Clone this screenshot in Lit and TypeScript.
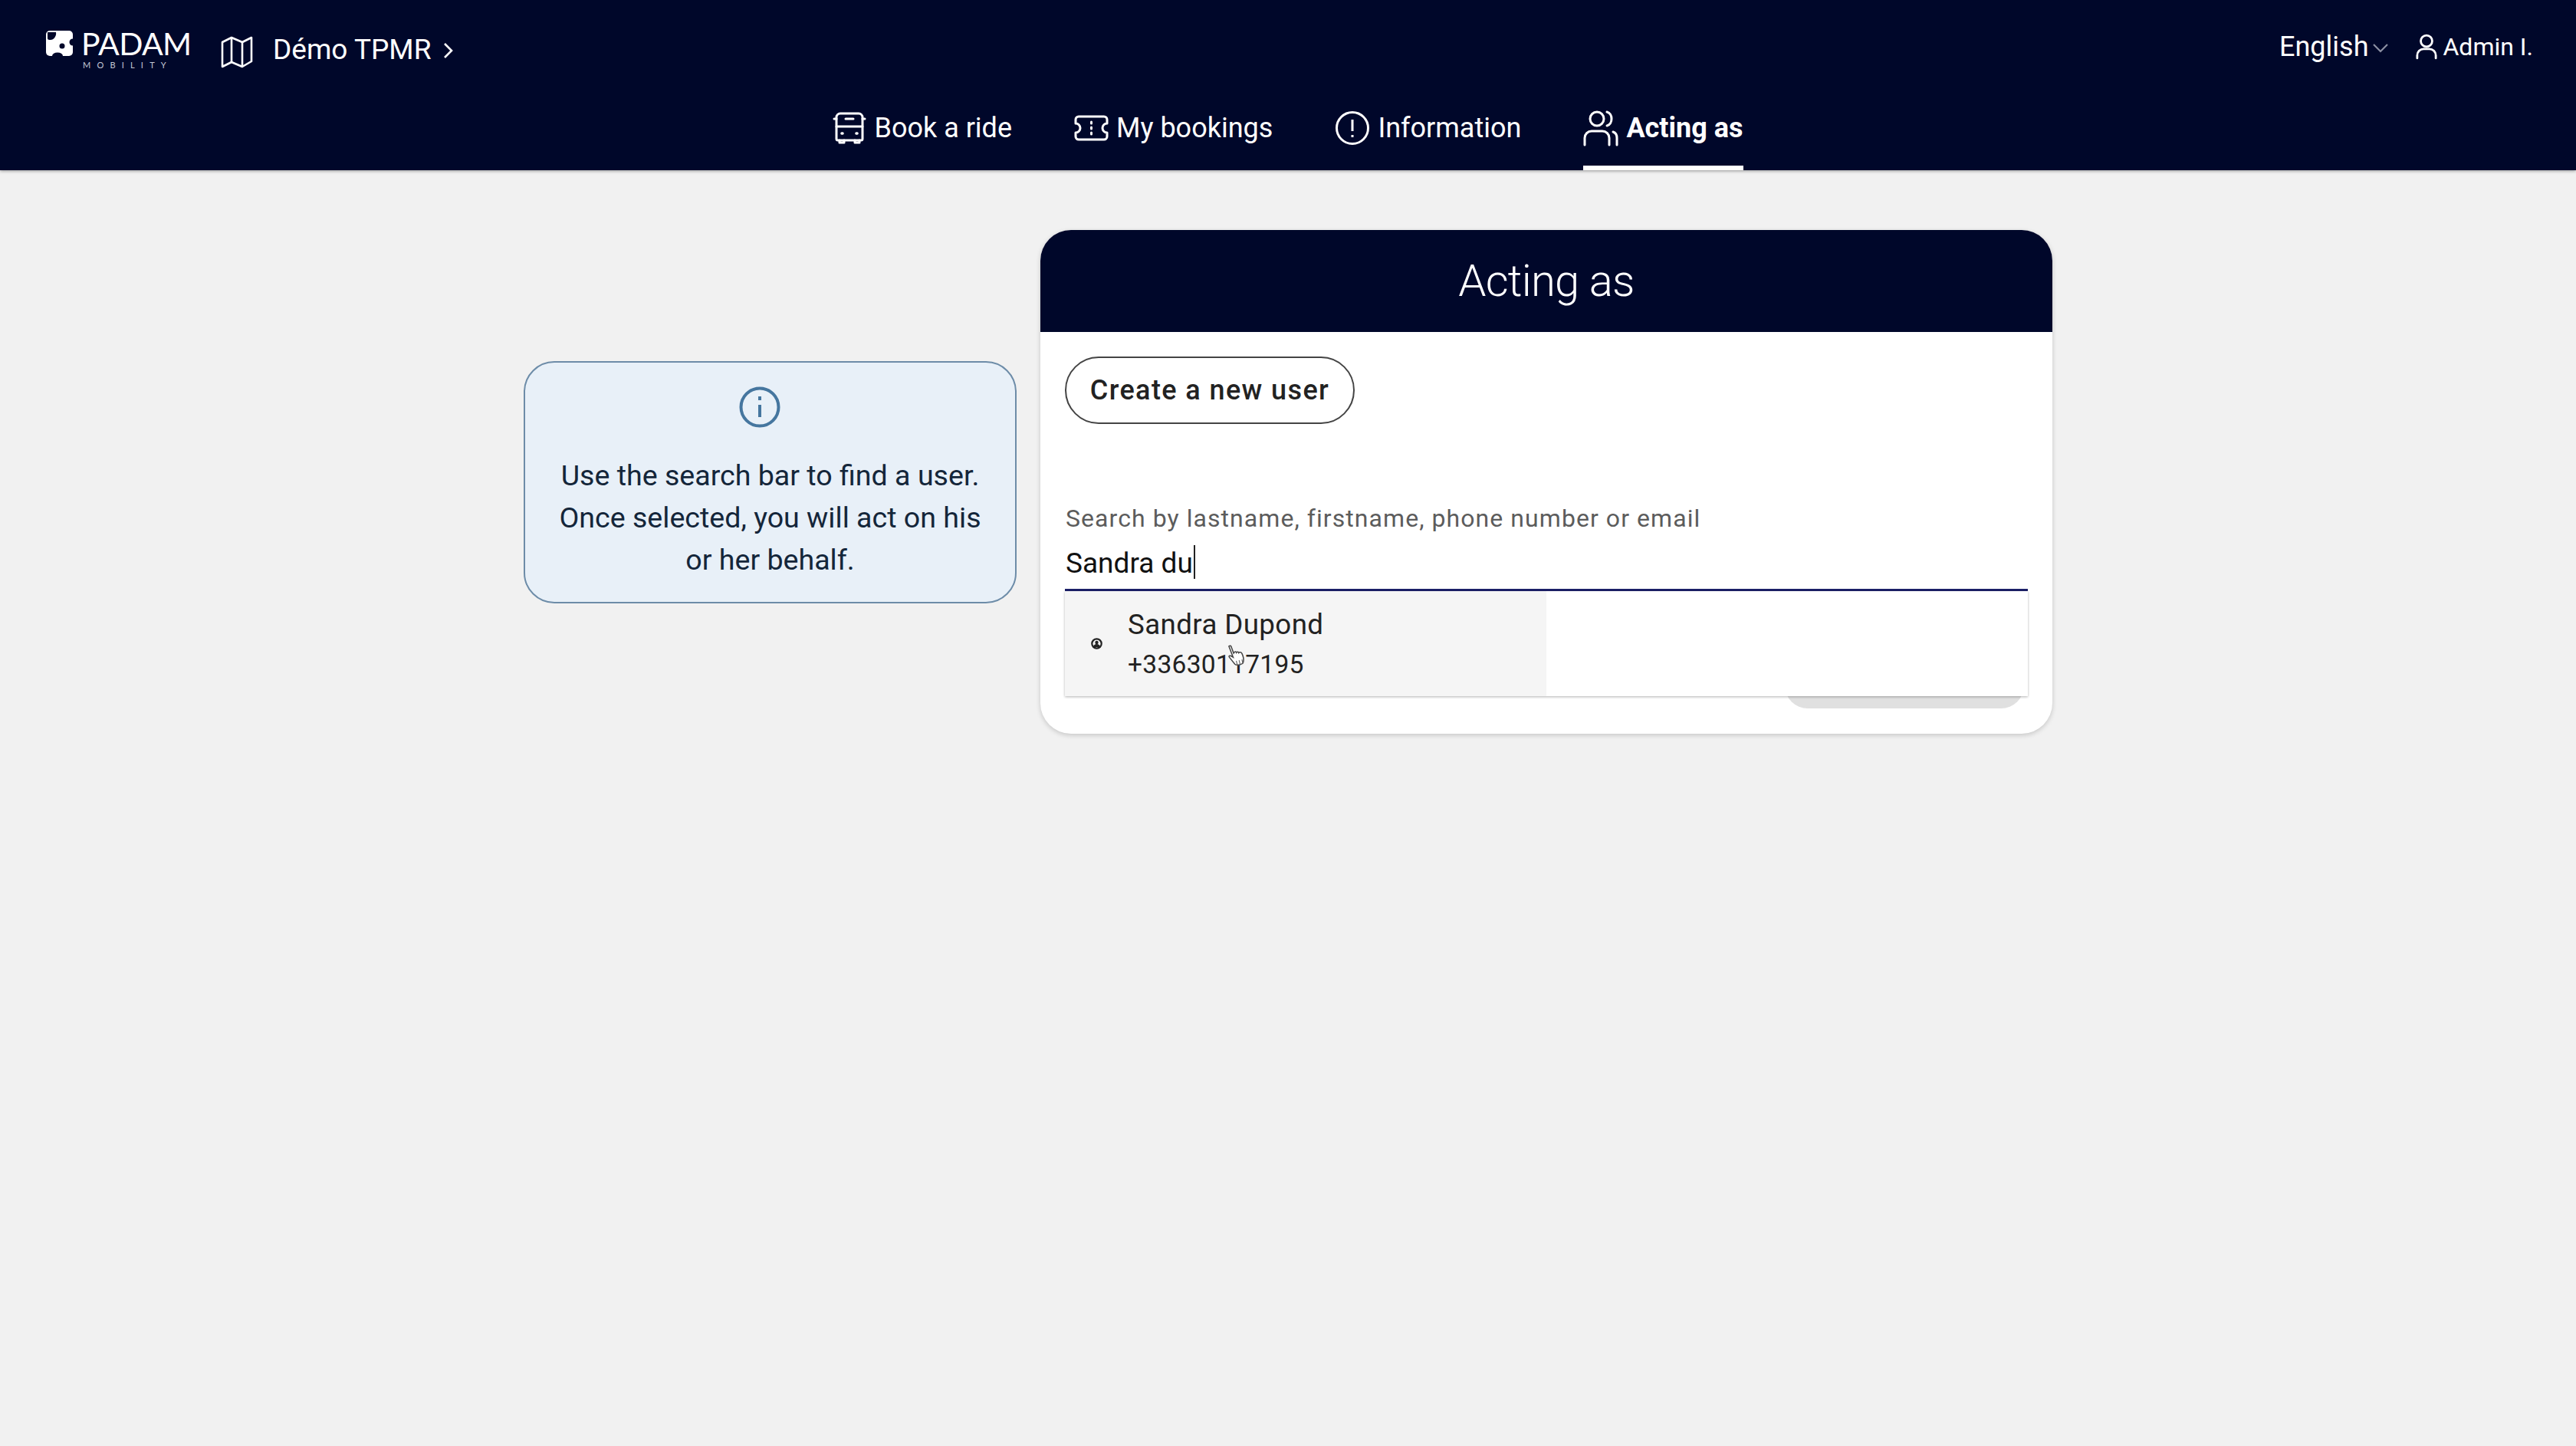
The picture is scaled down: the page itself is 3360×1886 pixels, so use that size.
import { LitElement, html, css } from "lit";
import { customElement } from "lit/decorators.js";

@customElement("app-root")
export class AppRoot extends LitElement {
  static styles = css`
    :host { display: block; min-height: 1886px; background: #f1f1f1; font-family: Roboto, "Liberation Sans", sans-serif; color: #111; }
    svg { display: block; flex: none; }
    header { height: 222px; background: #00072a; color: #fff; box-sizing: border-box; position: relative; box-shadow: 0 1px 4px rgba(0,0,0,.4); }
    .top { display: flex; align-items: flex-start; justify-content: space-between; padding: 37px 56px 0 60px; height: 100px; box-sizing: border-box; }
    .left, .right { display: flex; align-items: center; }
    .logo { display: flex; gap: 11px; width: 188px; margin-right: 40px; }
    .wordmark { display: flex; flex-direction: column; font-family: Lato, sans-serif; font-weight: 400; margin-top: -1px; }
    .padam { font-size: 41px; line-height: 42px; letter-spacing: -.6px; }
    .mob { font-size: 11px; line-height: 14px; letter-spacing: 8.2px; color: #c4c8d6; white-space: nowrap; padding-left: 2px; }
    .project { font-size: 37px; margin-left: 26px; }
    .chev { margin-left: 16px; margin-top: 2px; }
    .right { padding-top: 3px; }
    .lang { font-size: 36px; }
    .langchev { margin: 4px 0 0 6px; }
    .user { margin-left: 36px; }
    .admin { font-size: 32px; margin-left: 7px; }
    nav { display: flex; justify-content: center; height: 122px; }
    nav a { display: flex; align-items: center; gap: 10px; font-size: 36px; height: 122px; margin: 0 40.5px; padding-top: 18px; border-bottom: 6px solid transparent; box-sizing: border-box; }
    nav a.active { font-weight: 700; font-size: 36px; border-bottom-color: #fff; }
    main { display: flex; justify-content: center; align-items: flex-start; gap: 31px; padding-top: 78px; }
    .info { width: 643px; height: 316px; margin-top: 171px; box-sizing: border-box; background: #e8f0f8; border: 2px solid #6d8ca8; border-radius: 40px; display: flex; flex-direction: column; align-items: center; padding-top: 31px; }
    .infoicon { margin-right: 27px; }
    .info p { margin: 35px 0 0; font-size: 37.6px; line-height: 55px; text-align: center; color: #14263a; white-space: nowrap; }
    .card { width: 1320px; height: 657px; box-sizing: border-box; background: #fff; border-radius: 40px; box-shadow: 0 2px 6px rgba(0,0,0,.18); display: flex; flex-direction: column; }
    .card h1 { margin: 0; height: 133px; background: #00072a; color: #fff; border-radius: 40px 40px 0 0; font-size: 58px; letter-spacing: -.8px; font-weight: 300; text-align: center; line-height: 133px; }
    .body { flex: 1; padding: 32px 32px 33px; display: flex; flex-direction: column; position: relative; }
    .create { align-self: flex-start; height: 88px; width: 378px; box-sizing: border-box; border: 2px solid #444; border-radius: 44px; background: #fff; font: 500 36px Roboto, sans-serif; letter-spacing: 1.4px; color: #222; padding: 0; }
    label { margin-top: 103px; padding-left: 1px; font-size: 32px; line-height: 40px; letter-spacing: 1.06px; color: #5c5c5c; }
    .field { height: 72px; box-sizing: content-box; border-bottom: 3px solid #1c2068; padding-left: 1px; font-size: 37px; line-height: 78px; color: #111; display: flex; }
    .field span { height: 72px; }
    .caret { width: 2px; height: 44px; background: #222; margin: 15px 0 0 1px; }
    .dropdown { position: absolute; left: 32px; right: 32px; top: 338px; height: 137px; background: #fff; box-shadow: 0 1px 3px rgba(0,0,0,.3); z-index: 2; }
    .item { width: 50%; height: 100%; background: #f5f5f5; display: flex; align-items: center; position: relative; }
    .dot { margin-left: 34px; }
    .names { margin-left: 33px; display: flex; flex-direction: column; gap: 8px; padding-top: 2px; }
    .name { font-size: 36.7px; line-height: 44px; letter-spacing: .4px; color: #222; }
    .phone { font-size: 33.5px; line-height: 44px; letter-spacing: .3px; color: #222; }
    .cursor { position: absolute; left: 211px; top: 68px; transform: rotate(-14deg); }
    .search { align-self: flex-end; margin: auto 5px 0 0; width: 312px; height: 60px; background: #e0e0e0; border-radius: 44px; }
  `;

  render() {
    return html`
      <header>
        <div class="top">
          <div class="left">
            <div class="logo">
              <svg width="35" height="33" viewBox="0 0 35 33" style="margin-top:3px"><rect width="35" height="33" rx="5" fill="#fff"/><path d="M2 2h11c1 5-3 10-7 10-2 0-4 0-4-2z" fill="#00072a"/><circle cx="21" cy="20" r="3.5" fill="#00072a"/><circle cx="35" cy="15" r="4.5" fill="#00072a"/><ellipse cx="15" cy="33" rx="7" ry="4.5" fill="#00072a"/></svg>
              <div class="wordmark"><span class="padam">PADAM</span><span class="mob">MOBILITY</span></div>
            </div>
            <svg width="42" height="44" viewBox="0 0 42 44" fill="none" stroke="#fff" stroke-width="2.6" stroke-linejoin="round" style="margin-top:6px"><path d="M2 9l12-6 14 6 12-6v31l-12 7-14-6-12 6z"/><path d="M14 3v32M28 9v32"/></svg>
            <span class="project">Démo TPMR</span>
            <svg class="chev" width="14" height="22" viewBox="0 0 14 22" fill="none" stroke="#fff" stroke-width="2.6"><path d="M2 2l9 9-9 9"/></svg>
          </div>
          <div class="right">
            <span class="lang">English</span>
            <svg class="langchev" width="20" height="12" viewBox="0 0 20 12" fill="none" stroke="#8b90a3" stroke-width="2.2"><path d="M1 1l9 9 9-9"/></svg>
            <svg class="user" width="28" height="36" viewBox="0 0 30 36" fill="none" stroke="#fff" stroke-width="3"><circle cx="15" cy="10" r="8"/><path d="M2 34v-4a9 9 0 0 1 9-9h8a9 9 0 0 1 9 9v4" stroke-linecap="round"/></svg>
            <span class="admin">Admin I.</span>
          </div>
        </div>
        <nav>
          <a>
            <svg width="44" height="42" viewBox="0 0 44 42" fill="none" stroke="#fff" stroke-width="3" stroke-linejoin="round" stroke-linecap="round"><path d="M10 2h24a5 5 0 0 1 5 5v28a2 2 0 0 1-2 2H7a2 2 0 0 1-2-2V7a5 5 0 0 1 5-5z"/><path d="M5 19h34M5 9H2M39 9h3M17 9h10M9 37v3h6v-3M29 37v3h6v-3"/><path d="M12 28h1M31 28h1" stroke-width="3.6"/></svg>
            Book a ride
          </a>
          <a>
            <svg width="45" height="34" viewBox="0 0 45 34" fill="none" stroke="#fff" stroke-width="3" stroke-linejoin="round" stroke-linecap="round"><path d="M6 2h33a4 4 0 0 1 4 4v5a6 6 0 0 0 0 12v5a4 4 0 0 1-4 4H6a4 4 0 0 1-4-4v-5a6 6 0 0 0 0-12V6a4 4 0 0 1 4-4z"/><path d="M22.5 9v2M22.5 16v2M22.5 23v2"/></svg>
            My bookings
          </a>
          <a>
            <svg width="46" height="46" viewBox="0 0 46 46" fill="none" stroke="#fff" stroke-width="3"><circle cx="23" cy="23" r="20.5"/><path d="M23 12v15M23 32v3"/></svg>
            Information
          </a>
          <a class="active">
            <svg width="46" height="48" viewBox="0 0 46 48" fill="none" stroke="#fff" stroke-width="3" stroke-linecap="round"><circle cx="18" cy="12" r="9"/><path d="M2 46v-9a9 9 0 0 1 9-9h14a9 9 0 0 1 9 9v9"/><path d="M31 3c4 1 6 5 6 9s-2 8-6 9M39 29c3 1 5 4 5 8v9"/></svg>
            Acting as
          </a>
        </nav>
      </header>
      <main>
        <aside class="info">
          <svg class="infoicon" width="54" height="54" viewBox="0 0 54 54" fill="none" stroke="#45769f" stroke-width="4"><circle cx="27" cy="27" r="24.5"/><path d="M27 24v16M27 13v5"/></svg>
          <p>Use the search bar to find a user.<br>Once selected, you will act on his<br>or her behalf.</p>
        </aside>
        <section class="card">
          <h1>Acting as</h1>
          <div class="body">
            <button class="create">Create a new user</button>
            <label>Search by lastname, firstname, phone number or email</label>
            <div class="field"><span>Sandra du</span><i class="caret"></i></div>
            <div class="dropdown">
              <div class="item">
                <svg class="dot" width="15" height="15" viewBox="0 0 15 15"><circle cx="7.5" cy="7.5" r="6.2" fill="#f5f5f5" stroke="#222" stroke-width="2.2"/><circle cx="7.5" cy="6" r="2.2" fill="#222"/><path d="M3 12a4.5 4 0 0 1 9 0z" fill="#222"/></svg>
                <div class="names"><span class="name">Sandra Dupond</span><span class="phone">+33630117195</span></div>
                <svg class="cursor" width="26" height="34" viewBox="0 0 26 36"><path d="M6 2c2-1 3 0 3 2l1 9 1-1c1-1 3-1 3 1 1-1 3-1 3 1 1-1 4 0 4 2 1 4 1 8-1 12-1 3-10 3-12 0L3 17c-1-2 1-3 3-1l2 2z" fill="#fff" stroke="#444" stroke-width="1.6"/><path d="M11 24v6M15 24v6M19 24v6" stroke="#666" stroke-width="1.2"/></svg>
              </div>
            </div>
            <div class="search"></div>
          </div>
        </section>
      </main>
    `;
  }
}
